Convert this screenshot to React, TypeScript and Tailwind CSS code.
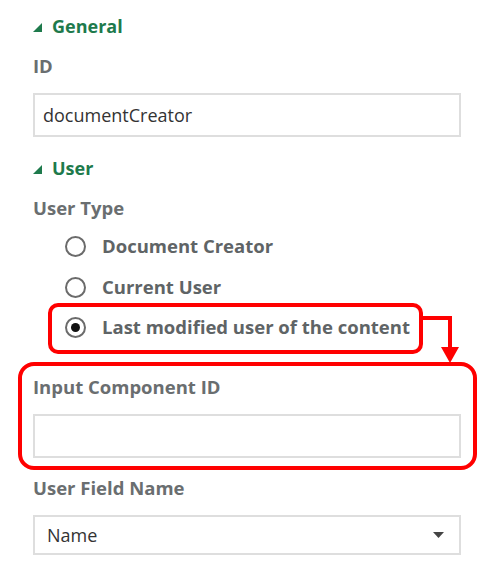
import React from 'react';

const FONT = { fontFamily: '"Open Sans", "Noto Sans", sans-serif' };

function SectionHeader({ title, className = '' }: { title: string; className?: string }) {
  return (
    <div className={`flex h-9 items-center ${className}`}>
      {/* collapse triangle */}
      <svg width="9" height="9" viewBox="0 0 9 9" className="mr-[10px] mt-[2px]">
        <polygon points="9,0 9,9 0,9" fill="#1e7a4c" />
      </svg>
      <span className="text-[18px] font-bold text-[#1e7a4c]">{title}</span>
    </div>
  );
}

function FieldLabel({ text, className = '' }: { text: string; className?: string }) {
  return (
    <div className={`flex h-9 items-center text-[18.5px] font-bold text-[#6a6e70] ${className}`}>{text}</div>
  );
}

function Radio({ label, checked, className = '' }: { label: string; checked?: boolean; className?: string }) {
  return (
    <div className={`flex h-10 items-center pl-[32px] ${className}`}>
      <span className="flex h-[21px] w-[21px] items-center justify-center rounded-full border-2 border-[#6b6b6b]">
        {checked && <span className="h-[9px] w-[9px] rounded-full bg-[#111]" />}
      </span>
      <span className="ml-[16px] text-[18.5px] font-bold text-[#5f6466]">{label}</span>
    </div>
  );
}

export default function App() {
  return (
    <div className="relative h-[584px] w-[488px] overflow-hidden bg-white" style={FONT}>
      <div className="flex flex-col px-[33px] pt-[8px] pr-[27px]">
        <SectionHeader title="General" />
        <FieldLabel text="ID" className="mt-[4px]" />
        <div className="mt-[9px] flex h-[44px] items-center border-2 border-[#dedede] px-[8px] text-[18px] text-[#333]">
          documentCreator
        </div>

        <SectionHeader title="User" className="mt-[13px]" />
        <FieldLabel text="User Type" className="mt-[4px]" />
        <Radio label="Document Creator" />
        <Radio label="Current User" className="mt-[1px]" />
        <Radio label="Last modified user of the content" checked />

        <FieldLabel text="Input Component ID" className="mt-[22px]" />
        <div className="mt-[9px] h-[44px] border-2 border-[#dedede]" />

        <FieldLabel text="User Field Name" className="mt-[12px]" />
        <div className="mt-[9px] flex h-[40px] items-center justify-between border-2 border-[#dedede] pl-[12px] pr-[15px] text-[18px] text-[#333]">
          <span>Name</span>
          <svg width="11" height="6" viewBox="0 0 11 6">
            <polygon points="0,0 11,0 5.5,6" fill="#444" />
          </svg>
        </div>
      </div>

      {/* red annotation overlay */}
      <div className="absolute left-[48px] top-[303px] h-[51px] w-[375px] rounded-[10px] border-[4px] border-[#ff0000]" />
      <div className="absolute left-[18px] top-[362px] h-[108px] w-[459px] rounded-[16px] border-[4px] border-[#ff0000]" />
      <svg className="absolute left-0 top-0" width="488" height="584">
        <polyline points="421,318 450,318 450,349" fill="none" stroke="#ff0000" strokeWidth="4" />
        <polygon points="441,347 459,347 450,363" fill="#ff0000" />
      </svg>
    </div>
  );
}
